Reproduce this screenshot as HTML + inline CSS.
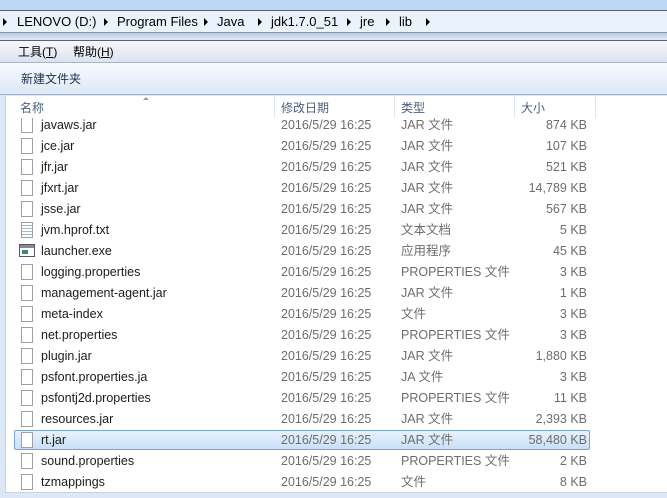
<!DOCTYPE html>
<html><head><meta charset="utf-8"><style>
*{margin:0;padding:0;box-sizing:border-box}
body{width:667px;height:498px;overflow:hidden;background:#dce8f5;font-family:"Liberation Sans","Noto Sans CJK SC",sans-serif;font-size:12px;position:relative}
span{line-height:15px;white-space:nowrap}
.abs{position:absolute}
#top{left:0;top:0;width:667px;height:10px;background:#bcd8f5}
#addr{left:0;top:10px;width:667px;height:23px;background:#eaf3fc;border-top:1px solid #5a6470;border-bottom:1px solid #8a96a4}
#addr span{position:absolute;top:3px;font-size:13px;color:#000}
.tri{position:absolute;top:7px;width:0;height:0;border-top:4px solid transparent;border-bottom:4px solid transparent;border-left:4px solid #000}
#blur{left:0;top:33px;width:667px;height:7px;background:linear-gradient(#b8cde6,#dfe9f5)}
#menu{left:0;top:40px;width:667px;height:23px;background:linear-gradient(#f6f8fb,#dce3ef);border-top:1px solid #5a6470;border-bottom:1px solid #a8b6c8}
#menu span{position:absolute;top:4px;font-size:12px;color:#000}
#tool{left:0;top:63px;width:667px;height:32px;background:linear-gradient(#f7fbff 0%,#eaf2fb 50%,#dce8f5 100%);border-bottom:1px solid #a0b2c6}
#tool span{position:absolute;left:21px;top:9px;color:#1e3250}
#list{left:5px;top:96px;width:662px;height:397px;background:#fff;border-left:1px solid #c9d3df;border-bottom:1px solid #c9d3df}
.hd{position:absolute;top:5px;color:#4c607a}
.sep{position:absolute;top:0;width:1px;height:22px;background:#e1e6ee}
.row{position:absolute;left:9px;width:576px;height:20px}
.row .ic{position:absolute;left:7px;top:2px;width:12px;height:16px;border:1px solid #9aa0a8;background:#fff}
.row .n{position:absolute;left:27px;top:3px;color:#1b1b1b;font-size:12.5px}
.row .d{position:absolute;left:267px;top:3px;color:#6d6d6d;font-size:12.5px}
.row .t{position:absolute;left:387px;top:3px;color:#6d6d6d;font-size:12.5px}
.row .s{position:absolute;right:3px;top:3px;color:#6d6d6d;font-size:12.5px}
.sel{background:linear-gradient(#e8f2fd,#c9e0f9);border:1px solid #7da2ce;border-radius:2px}
</style></head><body>
<div id="top" class="abs"></div>
<div id="addr" class="abs">
<div class="tri" style="left:3px"></div><span style="left:17px">LENOVO (D:)</span>
<div class="tri" style="left:104px"></div><span style="left:117px">Program Files</span>
<div class="tri" style="left:204px"></div><span style="left:217px">Java</span>
<div class="tri" style="left:258px"></div><span style="left:271px">jdk1.7.0_51</span>
<div class="tri" style="left:347px"></div><span style="left:360px">jre</span>
<div class="tri" style="left:386px"></div><span style="left:399px">lib</span>
<div class="tri" style="left:426px"></div>
</div>
<div id="blur" class="abs"></div>
<div id="menu" class="abs"><span style="left:18px">工具(<u>T</u>)</span><span style="left:73px">帮助(<u>H</u>)</span></div>
<div id="tool" class="abs"><span>新建文件夹</span></div>
<div id="list" class="abs">
<span class="hd" style="left:14px">名称</span>
<div class="abs" style="left:137px;top:1px;width:0;height:0;border-left:3px solid transparent;border-right:3px solid transparent;border-bottom:3px solid #8aa0bc"></div>
<div class="sep" style="left:268px"></div><span class="hd" style="left:275px">修改日期</span>
<div class="sep" style="left:388px"></div><span class="hd" style="left:395px">类型</span>
<div class="sep" style="left:508px"></div><span class="hd" style="left:515px">大小</span>
<div class="sep" style="left:589px"></div>
</div>
<div class="abs" style="left:5px;top:118px;width:662px;height:375px;overflow:hidden">
<div class="row" style="top:-3px"><div class="ic"></div><span class="n">javaws.jar</span><span class="d">2016/5/29 16:25</span><span class="t">JAR 文件</span><span class="s">874 KB</span></div>
<div class="row" style="top:18px"><div class="ic"></div><span class="n">jce.jar</span><span class="d">2016/5/29 16:25</span><span class="t">JAR 文件</span><span class="s">107 KB</span></div>
<div class="row" style="top:39px"><div class="ic"></div><span class="n">jfr.jar</span><span class="d">2016/5/29 16:25</span><span class="t">JAR 文件</span><span class="s">521 KB</span></div>
<div class="row" style="top:60px"><div class="ic"></div><span class="n">jfxrt.jar</span><span class="d">2016/5/29 16:25</span><span class="t">JAR 文件</span><span class="s">14,789 KB</span></div>
<div class="row" style="top:81px"><div class="ic"></div><span class="n">jsse.jar</span><span class="d">2016/5/29 16:25</span><span class="t">JAR 文件</span><span class="s">567 KB</span></div>
<div class="row" style="top:102px"><div class="ic" style="background:repeating-linear-gradient(#fff 0 2px,#a9b8c8 2px 3px)"></div><span class="n">jvm.hprof.txt</span><span class="d">2016/5/29 16:25</span><span class="t">文本文档</span><span class="s">5 KB</span></div>
<div class="row" style="top:123px"><div class="ic" style="left:5px;top:3px;width:16px;height:13px;border-color:#556;background:linear-gradient(#889 0 3px,#fff 3px)"><div style="position:absolute;left:2px;top:5px;width:6px;height:4px;background:#3a8a7a"></div></div><span class="n">launcher.exe</span><span class="d">2016/5/29 16:25</span><span class="t">应用程序</span><span class="s">45 KB</span></div>
<div class="row" style="top:144px"><div class="ic"></div><span class="n">logging.properties</span><span class="d">2016/5/29 16:25</span><span class="t">PROPERTIES 文件</span><span class="s">3 KB</span></div>
<div class="row" style="top:165px"><div class="ic"></div><span class="n">management-agent.jar</span><span class="d">2016/5/29 16:25</span><span class="t">JAR 文件</span><span class="s">1 KB</span></div>
<div class="row" style="top:186px"><div class="ic"></div><span class="n">meta-index</span><span class="d">2016/5/29 16:25</span><span class="t">文件</span><span class="s">3 KB</span></div>
<div class="row" style="top:207px"><div class="ic"></div><span class="n">net.properties</span><span class="d">2016/5/29 16:25</span><span class="t">PROPERTIES 文件</span><span class="s">3 KB</span></div>
<div class="row" style="top:228px"><div class="ic"></div><span class="n">plugin.jar</span><span class="d">2016/5/29 16:25</span><span class="t">JAR 文件</span><span class="s">1,880 KB</span></div>
<div class="row" style="top:249px"><div class="ic"></div><span class="n">psfont.properties.ja</span><span class="d">2016/5/29 16:25</span><span class="t">JA 文件</span><span class="s">3 KB</span></div>
<div class="row" style="top:270px"><div class="ic"></div><span class="n">psfontj2d.properties</span><span class="d">2016/5/29 16:25</span><span class="t">PROPERTIES 文件</span><span class="s">11 KB</span></div>
<div class="row" style="top:291px"><div class="ic"></div><span class="n">resources.jar</span><span class="d">2016/5/29 16:25</span><span class="t">JAR 文件</span><span class="s">2,393 KB</span></div>
<div class="row sel" style="top:312px"><div class="ic" style="left:6px;top:1px"></div><span class="n" style="left:26px;top:2px">rt.jar</span><span class="d" style="left:266px;top:2px">2016/5/29 16:25</span><span class="t" style="left:386px;top:2px">JAR 文件</span><span class="s" style="right:2px;top:2px">58,480 KB</span></div>
<div class="row" style="top:333px"><div class="ic"></div><span class="n">sound.properties</span><span class="d">2016/5/29 16:25</span><span class="t">PROPERTIES 文件</span><span class="s">2 KB</span></div>
<div class="row" style="top:354px"><div class="ic"></div><span class="n">tzmappings</span><span class="d">2016/5/29 16:25</span><span class="t">文件</span><span class="s">8 KB</span></div>
</div>
</body></html>
